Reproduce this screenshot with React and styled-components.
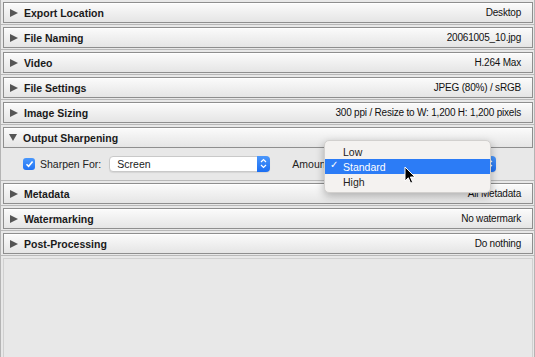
import styled, { createGlobalStyle } from "styled-components";

const GlobalStyle = createGlobalStyle`
  html, body {
    margin: 0;
    padding: 0;
    background: #e8e8e8;
  }
  body {
    font-family: "Liberation Sans", Arial, sans-serif;
    color: #1a1a1a;
  }
`;

const Frame = styled.div`
  width: 535px;
  height: 357px;
  box-sizing: border-box;
  border-left: 1px solid #b4b4b4;
  border-right: 1px solid #b4b4b4;
  display: flex;
  flex-direction: column;
  overflow: hidden;
`;

const Section = styled.div`
  padding: 2px 1px 1px 2px;
  border-bottom: 1px solid #b9b9b9;
`;

const Header = styled.div`
  height: 21px;
  box-sizing: border-box;
  display: flex;
  align-items: center;
  padding: 0 11px 0 5px;
  border: 1px solid #8e8e8e;
  background: linear-gradient(#fbfbfb, #e5e5e5);
  box-shadow: inset 0 1px 0 #ffffff;
`;

const Arrow = styled.span`
  width: 0;
  height: 0;
  margin-right: 6px;
  border-style: solid;
  ${p =>
    p.open
      ? `
    border-width: 7px 4.5px 0 4.5px;
    border-color: #555 transparent transparent transparent;
  `
      : `
    border-width: 4.5px 0 4.5px 8px;
    border-color: transparent transparent transparent #555;
    margin-left: 1px;
  `}
`;

const Title = styled.span`
  font-size: 10.5px;
  font-weight: bold;
  flex: 1;
`;

const Summary = styled.span`
  font-size: 10px;
  letter-spacing: -0.2px;
  color: #111;
`;

const Content = styled.div`
  position: relative;
  height: 31px;
  display: flex;
  align-items: center;
  padding-left: 20px;
`;

const Check = styled.span`
  width: 12px;
  height: 12px;
  border-radius: 3px;
  background: linear-gradient(#4a98fc, #1f72f3);
  display: flex;
  align-items: center;
  justify-content: center;
  margin-right: 5px;
`;

const Label = styled.span`
  font-size: 10.5px;
  color: #222;
  margin-left: ${p => p.before || 0}px;
  margin-right: ${p => p.gap || 0}px;
`;

const Select = styled.div`
  width: ${p => p.w}px;
  height: 16px;
  box-sizing: border-box;
  border: 1px solid #c9c9c9;
  border-radius: 4px;
  background: #fff;
  box-shadow: 0 1px 1px rgba(0, 0, 0, 0.08);
  display: flex;
  align-items: center;
  font-size: 10.5px;
  padding-left: 7px;
  position: relative;
`;

const Stepper = styled.span`
  position: absolute;
  right: -1px;
  top: -1px;
  bottom: -1px;
  width: 13px;
  border-radius: 0 4px 4px 0;
  background: linear-gradient(#4b97fb, #1b6ef2);
  display: flex;
  align-items: center;
  justify-content: center;
`;

const Menu = styled.div`
  position: absolute;
  left: 321px;
  top: -8px;
  width: 167px;
  box-sizing: border-box;
  padding: 3px 0;
  background: #f4f2f0;
  border: 1px solid #d2d0ce;
  border-radius: 5px;
  box-shadow: 0 3px 8px rgba(0, 0, 0, 0.28);
  z-index: 2;
`;

const Item = styled.div`
  height: 15px;
  display: flex;
  align-items: center;
  font-size: 10.5px;
  padding-left: 18px;
  position: relative;
  color: ${p => (p.active ? "#fff" : "#222")};
  background: ${p => (p.active ? "#2c7cf6" : "transparent")};
`;

const Tick = styled.span`
  position: absolute;
  left: 5px;
  top: 0;
  font-size: 10px;
`;

const Cursor = styled.svg`
  position: absolute;
  left: 401px;
  top: 18px;
  z-index: 3;
`;

const Empty = styled.div`
  flex: 1;
  margin: 2px 1px 0 2px;
  border: 1px solid #d0d0d0;
  border-bottom: none;
  background: #e8e8e8;
`;

const rows = [
  ["Export Location", "Desktop"],
  ["File Naming", "20061005_10.jpg"],
  ["Video", "H.264 Max"],
  ["File Settings", "JPEG (80%) / sRGB"],
  ["Image Sizing", "300 ppi / Resize to W: 1,200 H: 1,200 pixels"],
];

const rowsAfter = [
  ["Metadata", "All Metadata"],
  ["Watermarking", "No watermark"],
  ["Post-Processing", "Do nothing"],
];

function Row({ title, summary, open, children }) {
  return (
    <Section>
      <Header>
        <Arrow open={open} />
        <Title>{title}</Title>
        {summary && <Summary>{summary}</Summary>}
      </Header>
      {children}
    </Section>
  );
}

function Chevrons() {
  return (
    <svg width="7" height="11" viewBox="0 0 7 11">
      <path d="M1 4 L3.5 1.5 L6 4 M1 7 L3.5 9.5 L6 7" fill="none" stroke="#fff" strokeWidth="1.2" />
    </svg>
  );
}

export default function App() {
  return (
    <>
      <GlobalStyle />
      <Frame>
        {rows.map(([t, s]) => (
          <Row key={t} title={t} summary={s} />
        ))}
        <Row title="Output Sharpening" open>
          <Content>
            <Check>
              <svg width="9" height="8" viewBox="0 0 9 8">
                <path d="M1.5 4.2 L3.6 6.3 L7.6 1.5" fill="none" stroke="#fff" strokeWidth="1.6" />
              </svg>
            </Check>
            <Label gap={8}>Sharpen For:</Label>
            <Select w={161}>
              Screen
              <Stepper>
                <Chevrons />
              </Stepper>
            </Select>
            <Label before={22} gap={10}>Amount:</Label>
            <Select w={155}>
              <Stepper>
                <Chevrons />
              </Stepper>
            </Select>
            <Menu>
              <Item>Low</Item>
              <Item active>
                <Tick>✓</Tick>
                Standard
              </Item>
              <Item>High</Item>
            </Menu>
            <Cursor width="12" height="19" viewBox="0 0 12 19">
              <path d="M1 1 L1 15 L4.3 11.8 L6.6 17.2 L8.7 16.3 L6.4 11 L11 11 Z" fill="#000" stroke="#fff" strokeWidth="1" />
            </Cursor>
          </Content>
        </Row>
        {rowsAfter.map(([t, s]) => (
          <Row key={t} title={t} summary={s} />
        ))}
        <Empty />
      </Frame>
    </>
  );
}
